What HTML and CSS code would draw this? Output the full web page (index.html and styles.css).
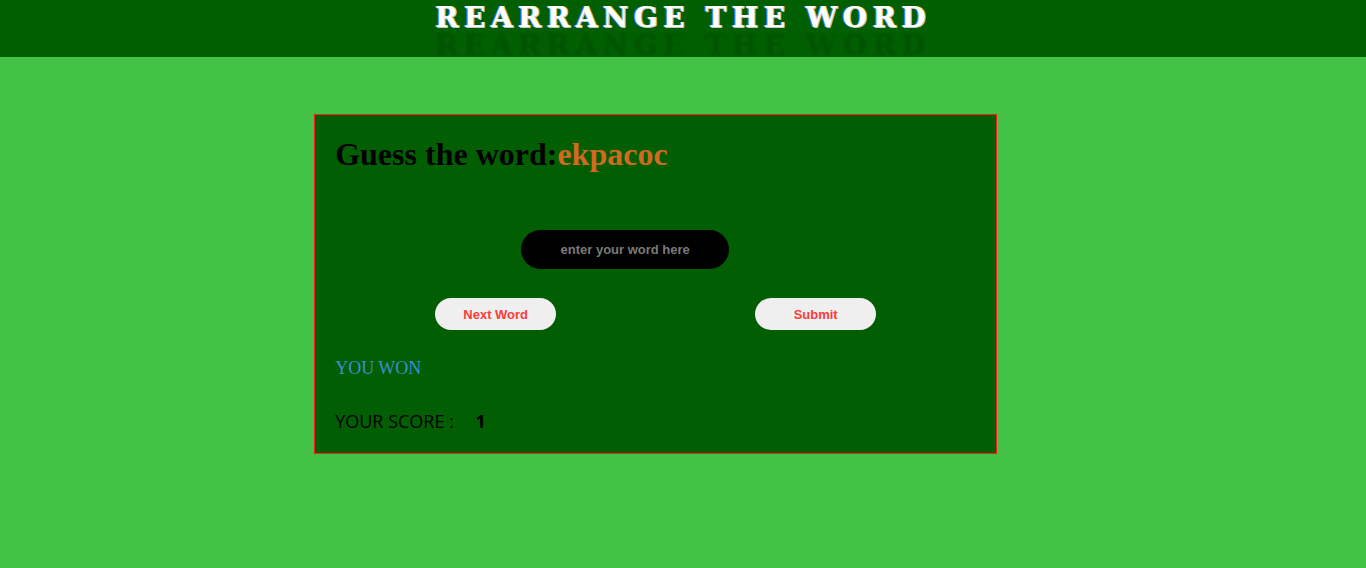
FILE: index.html
```html
<!DOCTYPE html>
<html>
<head>
<meta charset="utf-8">
<link rel="stylesheet" href="styles.css">
</head>
<body>
<header class="top">
  <h2 class="title">REARRANGE THE WORD</h2>
</header>
<main class="card">
  <h1 class="guess">Guess the word:<span class="scrambled">ekpacoc</span></h1>
  <div class="input-row">
    <input class="word-input" type="text" placeholder="enter your word here">
  </div>
  <div class="btn-row">
    <button class="btn">Next Word</button>
    <button class="btn">Submit</button>
  </div>
  <p class="result">YOU WON</p>
  <p class="score">YOUR SCORE : <b class="score-num">1</b></p>
</main>
</body>
</html>
```
FILE: styles.css
```css
html, body {
  margin: 0;
  padding: 0;
}
body {
  background: #44c147;
  height: 568px;
  overflow: hidden;
}
.top {
  background: #015e01;
  height: 57px;
  text-align: center;
}
.title {
  margin: 0;
  font-family: "DejaVu Serif", serif;
  font-weight: 900;
  font-size: 28px;
  line-height: 36px;
  letter-spacing: 5.5px;
  color: #fff;
  text-shadow: 1px 1px 0 #c8c8c8, -1px 0 0 #4a7cff, 1px 0 0 #ffd000, 0 28px 2px rgba(0, 0, 0, 0.1);
}
.card {
  margin: 57px 0 0 23%;
  width: 50%;
  height: 340px;
  box-sizing: border-box;
  background: #025e02;
  border: 1px solid #ff1a1a;
  padding: 0 20px;
  display: flex;
  flex-direction: column;
}
.guess {
  margin: 21px 0 0;
  font-family: "Liberation Serif", serif;
  font-size: 32px;
  font-weight: bold;
  color: #000;
}
.scrambled {
  color: #d2691e;
}
.input-row {
  display: flex;
  margin-top: 57px;
  padding-left: 186px;
}
.word-input {
  width: 208px;
  height: 39px;
  box-sizing: border-box;
  border: none;
  border-radius: 20px;
  background: #000;
  color: #fff;
  text-align: center;
  font-family: "Liberation Sans", Arial, sans-serif;
  font-weight: bold;
  font-size: 13px;
  outline: none;
}
.word-input::placeholder {
  color: #7a7a7a;
}
.btn-row {
  display: flex;
  gap: 199px;
  margin-top: 29px;
  padding-left: 100px;
}
.btn {
  width: 121px;
  height: 32px;
  border: none;
  border-radius: 16px;
  background: #efefef;
  color: #ff3b3b;
  font-family: "Liberation Sans", Arial, sans-serif;
  font-weight: bold;
  font-size: 13px;
  padding: 0;
}
.result {
  margin: 28px 0 0;
  font-family: "Liberation Serif", serif;
  font-size: 18px;
  color: #3a8fd0;
}
.score {
  margin: 30px 0 0;
  font-family: "Open Sans", sans-serif;
  font-size: 18px;
  color: #000;
}
.score-num {
  margin-left: 17px;
  font-weight: bold;
}
```
